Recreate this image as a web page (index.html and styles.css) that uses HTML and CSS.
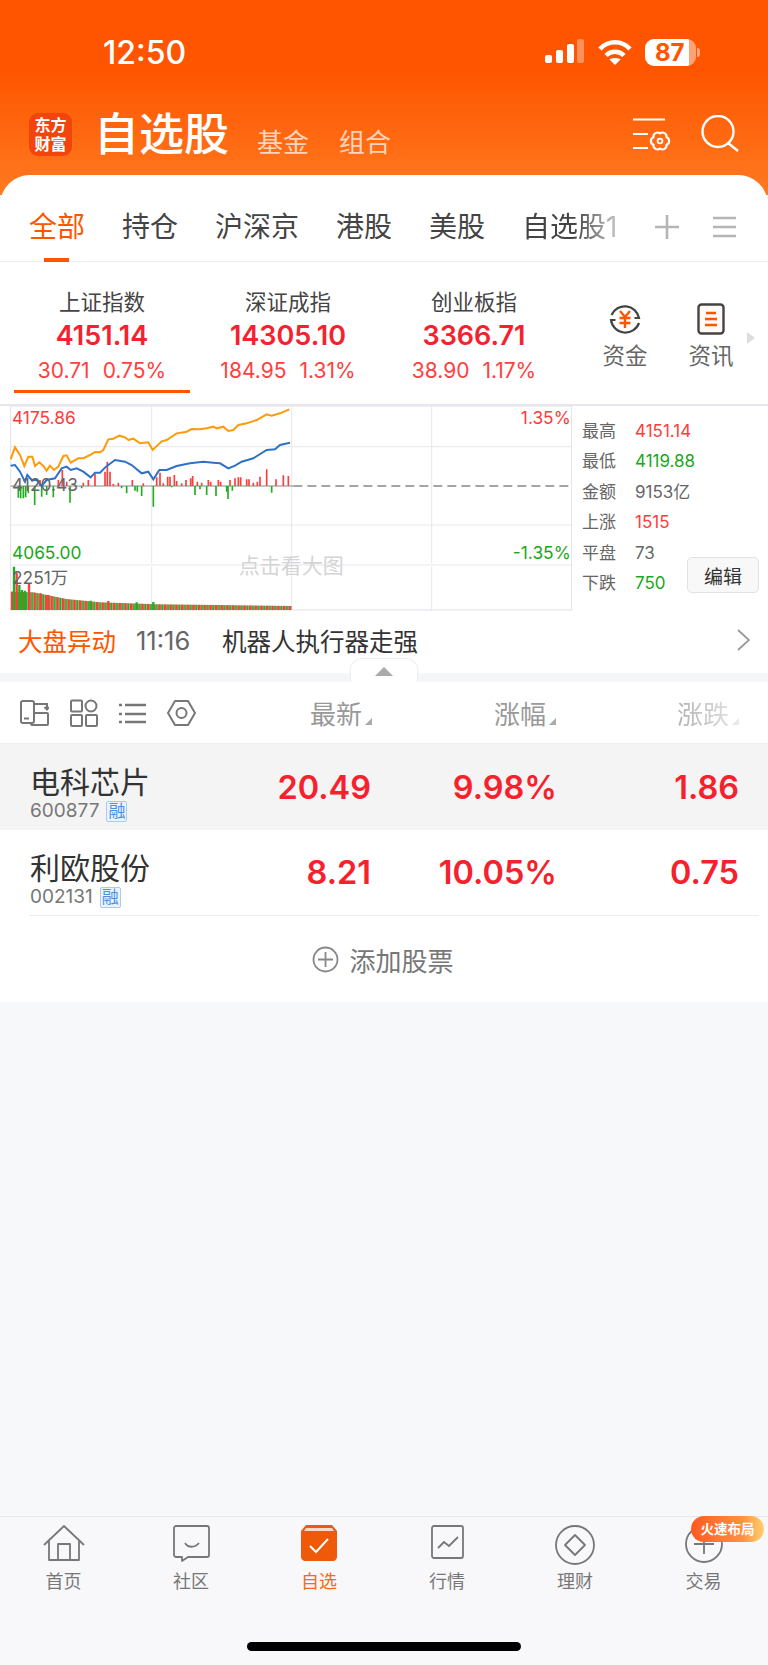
FILE: index.html
```html
<!doctype html>
<html lang="zh-CN">
  <head>
    <meta charset="UTF-8" />
    <meta name="viewport" content="width=device-width, initial-scale=1.0" />
    <title>自选股</title>
    <link rel="stylesheet" href="styles.css">
  </head>
  <body>
    <header class="top">
      <div class="status">
        <span class="clock">12:50</span>
        <svg class="signal" width="40" height="24" viewBox="0 0 40 24">
          <rect x="0" y="16" width="7" height="8" rx="2" fill="#fff"/>
          <rect x="11" y="11" width="7" height="13" rx="2" fill="#fff"/>
          <rect x="22" y="5" width="7" height="19" rx="2" fill="#fff"/>
          <rect x="32" y="0" width="7" height="24" rx="2" fill="#fff" opacity=".35"/>
        </svg>
        <svg class="wifi" width="34" height="25" viewBox="0 0 34 25">
          <path d="M2 9C10 0 24 0 32 9" fill="none" stroke="#fff" stroke-width="4.500"/>
          <path d="M8 15.500C13 10.500 21 10.500 26 15.500" fill="none" stroke="#fff" stroke-width="4.500"/>
          <path d="M17 25L11.500 19.500C14 17.500 20 17.500 22.500 19.500Z" fill="#fff"/>
        </svg>
        <div class="battery"><span class="battery-num">87</span></div>
        <span class="battery-nub"></span>
      </div>
      <div class="titlebar">
        <div class="logo">东方<br>财富</div>
        <h1 class="title">自选股</h1>
        <a class="subtitle">基金</a>
        <a class="subtitle">组合</a>
        <svg class="gear" width="38" height="33" viewBox="0 0 38 33">
          <path d="M0 1.500H32M0 16H15M0 30H15" stroke="#fff" stroke-width="2.200" fill="none"/>
          <path d="M33.500 26.750A4 4 0 0 1 27 30.500A4 4 0 0 1 20.500 26.750A4 4 0 0 1 20.500 19.250A4 4 0 0 1 27 15.500A4 4 0 0 1 33.500 19.250A4 4 0 0 1 33.500 26.750Z" stroke="#fff" stroke-width="2.200" fill="none" stroke-linejoin="round"/>
          <circle cx="27" cy="23" r="2.400" stroke="#fff" stroke-width="1.800" fill="none"/>
        </svg>
        <svg class="search" width="38" height="37" viewBox="0 0 38 37">
          <circle cx="17" cy="16.500" r="15.500" stroke="#fff" stroke-width="2.400" fill="none"/>
          <path d="M27 28L37 36" stroke="#fff" stroke-width="2.400" fill="none"/>
        </svg>
      </div>
    </header>

    <section class="sheet">
      <nav class="tabs">
        <a class="tab active">全部</a>
        <a class="tab">持仓</a>
        <a class="tab">沪深京</a>
        <a class="tab">港股</a>
        <a class="tab">美股</a>
        <a class="tab fade">自选股1</a>
        <svg class="tab-plus" width="24" height="24" viewBox="0 0 24 24">
          <path d="M12 0V24M0 12H24" stroke="#b5b5b5" stroke-width="2.600"/>
        </svg>
        <svg class="tab-menu" width="23" height="22" viewBox="0 0 23 22">
          <path d="M0 2H23M0 11H23M0 20H23" stroke="#b5b5b5" stroke-width="2.600"/>
        </svg>
      </nav>

      <div class="indexes">
        <div class="index selected">
          <div class="index-name">上证指数</div>
          <div class="index-price">4151.14</div>
          <div class="index-change"><span>30.71</span><span>0.75%</span></div>
        </div>
        <div class="index">
          <div class="index-name">深证成指</div>
          <div class="index-price">14305.10</div>
          <div class="index-change"><span>184.95</span><span>1.31%</span></div>
        </div>
        <div class="index">
          <div class="index-name">创业板指</div>
          <div class="index-price">3366.71</div>
          <div class="index-change"><span>38.90</span><span>1.17%</span></div>
        </div>
        <div class="shortcut shortcut-first">
          <svg width="32" height="34" viewBox="0 0 32 34">
            <path d="M2.500 13A14.500 14.500 0 0 1 30 16H25.500M30 21A14.500 14.500 0 0 1 2 18H6.500" fill="none" stroke="#444" stroke-width="2.200"/>
            <path d="M11 9L16 15L21 9M16 15V26M10.500 16H21.500M10.500 21H21.500" fill="none" stroke="#ff5500" stroke-width="2.400"/>
          </svg>
          <span>资金</span>
        </div>
        <div class="shortcut">
          <svg width="28" height="34" viewBox="0 0 28 34">
            <rect x="1.500" y="2.500" width="25" height="29" rx="3" fill="#fffaf6" stroke="#444" stroke-width="2.400"/>
            <path d="M9 11H19M8 17H20M8 23H20" stroke="#ff5500" stroke-width="2.400"/>
          </svg>
          <span>资讯</span>
        </div>
        <span class="more"></span>
      </div>

      <div class="market">
        <svg class="chart" width="562" height="206" viewBox="30 18 1686 618">
          <defs>
            <pattern id="vol" x="33" y="0" width="17" height="200" patternUnits="userSpaceOnUse">
              <rect x="0" y="0" width="8" height="200" fill="#ff3b3b"/>
              <rect x="9" y="0" width="7" height="200" fill="#22ad22"/>
            </pattern>
          </defs>
          <rect class="frame" x="32" y="18" width="1683" height="612"/>
          <path class="grid" d="M32 140H1715M32 375H1715M32 495H1715M455 18V490M455 500V630M875 18V630M1295 18V490M1295 500V630"/>
          <path class="baseline" d="M32 258H880"/>
          <path class="dash" d="M880 258H1710"/>
          <path class="bars-up" d="M120 258V240M175 258V240M187 258V210M200 258V245M250 258V248M265 258V240M285 258V222M315 258V215M322 258V185M330 258V215M340 258V252M355 258V248M397 258V240M430 258V250M470 258V232M480 258V218M490 258V250M503 258V230M510 258V230M523 258V225M530 258V243M545 258V250M558 258V240M572 258V235M578 258V228M592 258V245M605 258V248M625 258V240M632 258V245M655 258V240M662 258V245M690 258V240M705 258V235M715 258V232M722 258V232M740 258V238M747 258V238M760 258V248M772 258V245M780 258V230M800 258V208M828 258V238M850 258V226M865 258V228"/>
          <path class="bars-down" d="M55 258V293M62 258V295M70 258V295M77 258V292M85 258V280M104 258V315M125 258V290M140 258V285M160 258V292M210 258V308M245 258V265M365 258V265M380 258V280M405 258V272M412 258V275M425 258V288M460 258V320M515 258V262M585 258V285M600 258V268M620 258V285M648 258V288M680 258V275M684 258V297M697 258V272M815 258V278"/>
          <polyline class="line-orange" points="32,178 45,142 60,165 73,198 85,170 97,170 105,198 118,187 130,198 140,212 150,197 162,210 175,200 190,168 200,166 212,188 235,175 250,175 270,165 285,156 300,157 310,150 325,118 340,116 358,107 375,112 385,120 400,116 420,130 445,127 458,150 485,124 500,120 530,100 560,95 575,87 600,88 620,85 640,80 650,85 670,80 685,93 700,90 715,75 740,70 770,60 800,43 815,47 840,40 868,28"/>
          <polyline class="line-blue" points="32,197 45,195 60,215 75,245 82,225 95,240 110,240 125,258 140,240 165,235 185,205 200,200 212,210 230,205 250,215 272,232 285,218 300,218 318,200 345,180 375,185 395,195 425,220 445,215 460,238 478,210 500,210 530,198 570,190 610,185 640,188 660,190 685,205 705,197 725,185 760,175 800,150 825,148 840,135 870,128"/>
          <polygon points="33,575 100,577 200,597 300,607 470,613 875,618 875,630 33,630" fill="url(#vol)"/>
          <path class="vol-up" d="M36 630V575M50 630V518M87 630V550M122 630V580M145 630V585M325 630V603"/>
          <path class="vol-down" d="M42 630V500M58 630V555M66 630V570M75 630V572M272 630V602M410 630V607M460 630V606"/>
          <text class="label up" x="36" y="73">4175.86</text>
          <text class="label muted" x="36" y="274">4120.43</text>
          <text class="label down" x="36" y="478">4065.00</text>
          <text class="label muted" x="36" y="551">2251万</text>
          <text class="label up" x="1712" y="73" text-anchor="end">1.35%</text>
          <text class="label down" x="1712" y="478" text-anchor="end">-1.35%</text>
          <text class="label hint" x="874" y="520" text-anchor="middle">点击看大图</text>
        </svg>
        <div class="stats">
          <div class="stat"><span class="stat-name">最高</span><span class="up">4151.14</span></div>
          <div class="stat"><span class="stat-name">最低</span><span class="down">4119.88</span></div>
          <div class="stat"><span class="stat-name">金额</span><span class="gray">9153亿</span></div>
          <div class="stat"><span class="stat-name">上涨</span><span class="up">1515</span></div>
          <div class="stat"><span class="stat-name">平盘</span><span class="gray">73</span></div>
          <div class="stat"><span class="stat-name">下跌</span><span class="down">750</span></div>
          <button class="edit">编辑</button>
        </div>
      </div>

      <div class="news">
        <span class="news-tag">大盘异动</span>
        <span class="news-time">11:16</span>
        <span class="news-text">机器人执行器走强</span>
        <svg class="news-arrow" width="13" height="22" viewBox="0 0 13 22">
          <path d="M1 1L12 11L1 21" fill="none" stroke="#999" stroke-width="1.800"/>
        </svg>
      </div>
      <div class="band"><span class="handle"><i class="handle-arrow"></i></span></div>

      <div class="stock-head">
        <div class="tools">
          <svg width="29" height="28" viewBox="0 0 29 28">
            <rect x="1" y="2" width="13" height="22" rx="2" fill="none" stroke="#777" stroke-width="2"/>
            <path d="M4 19.500H9" stroke="#777" stroke-width="2"/>
            <path d="M15 5H27V10M24.500 8L27 10.500L29 8" fill="none" stroke="#777" stroke-width="2"/>
            <path d="M14.500 14H27C27.500 14 28 14.500 28 15V25C28 25.500 27.500 26 27 26H12C11.500 26 11 25.500 11 25V24" fill="none" stroke="#777" stroke-width="2"/>
          </svg>
          <svg width="28" height="28" viewBox="0 0 28 28">
            <rect x="1" y="1.500" width="11" height="11" rx="1" fill="none" stroke="#777" stroke-width="2"/>
            <circle cx="21" cy="7" r="5.500" fill="none" stroke="#777" stroke-width="2"/>
            <rect x="1" y="16" width="11" height="11" rx="1" fill="none" stroke="#777" stroke-width="2"/>
            <rect x="16" y="16" width="11" height="11" rx="1" fill="none" stroke="#777" stroke-width="2"/>
          </svg>
          <svg width="27" height="24" viewBox="0 0 27 24">
            <path d="M0 4H3M6 4H27M0 13H3M6 13H27M0 21H3M6 21H27" fill="none" stroke="#777" stroke-width="2.400"/>
          </svg>
          <svg width="29" height="28" viewBox="0 0 29 28">
            <path d="M8 2H21L28 14L21 26H8L1 14Z" fill="none" stroke="#777" stroke-width="2" stroke-linejoin="round"/>
            <circle cx="14.500" cy="14" r="5" fill="none" stroke="#777" stroke-width="2"/>
          </svg>
        </div>
        <div class="sort">最新<i></i></div>
        <div class="sort">涨幅<i></i></div>
        <div class="sort fade-soft">涨跌<i></i></div>
      </div>

      <div class="stock current">
        <div class="stock-info">
          <div class="stock-name">电科芯片</div>
          <div class="stock-code">600877<span class="badge">融</span></div>
        </div>
        <div class="num">20.49</div>
        <div class="num">9.98%</div>
        <div class="num">1.86</div>
      </div>
      <div class="stock">
        <div class="stock-info">
          <div class="stock-name">利欧股份</div>
          <div class="stock-code">002131<span class="badge">融</span></div>
        </div>
        <div class="num">8.21</div>
        <div class="num">10.05%</div>
        <div class="num">0.75</div>
      </div>
      <div class="add-stock">
        <svg width="27" height="27" viewBox="0 0 27 27">
          <circle cx="13.500" cy="13.500" r="12" fill="none" stroke="#888" stroke-width="1.800"/>
          <path d="M13.500 6V21M6 13.500H21" stroke="#888" stroke-width="1.800"/>
        </svg>
        <span>添加股票</span>
      </div>
    </section>

    <div class="blank"></div>

    <footer class="bottom">
      <div class="bottom-tabs">
        <a class="item">
          <svg width="42" height="37" viewBox="0 0 42 37">
            <path d="M1 20L21 1L41 20M6 16V35H36V16M15 35V19H27V35" fill="none" stroke="#777" stroke-width="1.800" stroke-linejoin="round"/>
          </svg>
          <span>首页</span>
        </a>
        <a class="item">
          <svg width="37" height="37" viewBox="0 0 37 37">
            <path d="M3 1H34C35 1 36 2 36 3V30C36 31 35 32 34 32H15L9 36V32H3C2 32 1 31 1 30V3C1 2 2 1 3 1Z" fill="none" stroke="#777" stroke-width="1.800" stroke-linejoin="round"/>
            <path d="M12 18C15 23 22 23 26 18" fill="none" stroke="#777" stroke-width="1.800"/>
          </svg>
          <span>社区</span>
        </a>
        <a class="item active">
          <svg width="36" height="36" viewBox="0 0 36 36">
            <path d="M5 0H31L36 6V32C36 34 34 36 32 36H4C2 36 0 34 0 32V6Z" fill="#ee5a0a"/>
            <path d="M5 3H31L33 6H3Z" fill="#ffd9c2"/>
            <path d="M9 21L15 27L27 14" fill="none" stroke="#fff" stroke-width="2"/>
          </svg>
          <span>自选</span>
        </a>
        <a class="item">
          <svg width="33" height="34" viewBox="0 0 33 34">
            <rect x="1" y="1" width="31" height="32" rx="2" fill="none" stroke="#777" stroke-width="1.800"/>
            <path d="M7 23L13 17L18 21L27 12" fill="none" stroke="#777" stroke-width="1.800"/>
          </svg>
          <span>行情</span>
        </a>
        <a class="item">
          <svg width="40" height="40" viewBox="0 0 40 40">
            <circle cx="20" cy="20" r="19" fill="none" stroke="#777" stroke-width="1.800"/>
            <path d="M20 10L30 20L20 30L10 20Z" fill="none" stroke="#777" stroke-width="1.800" stroke-linejoin="round"/>
          </svg>
          <span>理财</span>
        </a>
        <a class="item trade">
          <svg width="38" height="38" viewBox="0 0 38 38">
            <circle cx="19" cy="19" r="18" fill="none" stroke="#777" stroke-width="1.800"/>
            <path d="M19 9V29M9 19H29" stroke="#777" stroke-width="1.800"/>
          </svg>
          <span>交易</span>
          <b class="promo">火速布局</b>
        </a>
      </div>
      <div class="home-bar"></div>
    </footer>
  </body>
</html>
```

FILE: styles.css
```css
* {
  box-sizing: border-box;
}
body {
  margin: 0;
  width: 768px;
  height: 1665px;
  display: flex;
  flex-direction: column;
  background-color: #f7f8fa;
  font-family: Inter, "Noto Sans CJK SC", sans-serif;
  color: #333;
}

/* orange header */
.top {
  height: 195px;
  margin-bottom: -20px;
  background: linear-gradient(#ff5500 0, #ff5500 70px, #ff7a20 195px);
  color: #fff;
}
.status {
  display: flex;
  align-items: center;
  height: 104px;
  padding-left: 103px;
}
.clock {
  width: 442px;
  font-size: 32px;
  font-weight: 500;
}
.signal {
  margin-right: 13px;
  margin-top: -2px;
}
.wifi {
  margin-right: 13px;
}
.battery {
  width: 51px;
  height: 27px;
  border-radius: 9px;
  background: linear-gradient(to right, #fff 87%, rgba(255, 255, 255, 0.45) 87%);
  color: #ff5500;
  font-size: 24px;
  font-weight: bold;
  line-height: 27px;
  padding-left: 10px;
}
.battery-nub {
  width: 3px;
  height: 9px;
  margin-left: 1px;
  border-radius: 0 3px 3px 0;
  background-color: rgba(255, 255, 255, 0.5);
}
.titlebar {
  display: flex;
  align-items: flex-end;
  height: 52px;
  padding-left: 29px;
}
.logo {
  width: 43px;
  height: 43px;
  margin-right: 22px;
  border-radius: 9px;
  background-color: #f2440c;
  color: #fff;
  font-size: 16px;
  font-weight: bold;
  line-height: 19px;
  text-align: center;
  padding-top: 3px;
}
.title {
  margin: 0 28px -2px 0;
  font-size: 45px;
  font-weight: 500;
  line-height: 47px;
}
.subtitle {
  margin: 0 30px -3px 0;
  color: rgba(255, 255, 255, 0.72);
  font-size: 26px;
  line-height: 33px;
}
.gear {
  margin-left: 212px;
  margin-bottom: 5px;
}
.search {
  margin-left: 30px;
  margin-bottom: 4px;
}

/* white sheet */
.sheet {
  position: relative;
  background-color: #fff;
  border-radius: 30px 30px 0 0;
}
.tabs {
  display: flex;
  align-items: center;
  gap: 37px;
  height: 87px;
  padding: 17px 0 0 29px;
  border-bottom: 1px solid #eee;
}
.tab {
  position: relative;
  font-size: 28px;
  line-height: 40px;
  color: #444;
}
.tab.active {
  color: #ff5500;
}
.tab.active::after {
  content: "";
  position: absolute;
  left: 15px;
  bottom: -15px;
  width: 25px;
  height: 4px;
  background-color: #ff5500;
}
.fade {
  white-space: nowrap;
  -webkit-mask-image: linear-gradient(to right, #000 55%, rgba(0, 0, 0, 0.3));
  mask-image: linear-gradient(to right, #000 55%, rgba(0, 0, 0, 0.3));
}
.tab-plus {
  margin-left: 1px;
}
.tab-menu {
  margin-left: -3px;
}

/* index cards */
.indexes {
  display: flex;
  height: 142px;
  padding-left: 9px;
}
.index {
  width: 186px;
  padding-top: 26px;
  text-align: center;
}
.index.selected {
  background: linear-gradient(#ff5500, #ff5500) 5px 128px / 176px 3px no-repeat;
}
.index-name {
  font-size: 21.500px;
  line-height: 28px;
  color: #444;
}
.index-price {
  margin-top: 3px;
  font-size: 27px;
  font-weight: 600;
  line-height: 34px;
  color: #f5222d;
}
.index-change {
  display: flex;
  justify-content: center;
  gap: 13px;
  margin-top: 2px;
  font-size: 21px;
  line-height: 32px;
  color: #ff4040;
}
.shortcut {
  width: 86px;
  padding-top: 40px;
  display: flex;
  flex-direction: column;
  align-items: center;
  gap: 5px;
  font-size: 22.500px;
  line-height: 30px;
  color: #666;
}
.shortcut-first {
  margin-left: 15px;
}
.more {
  width: 0;
  height: 0;
  margin: 70px 0 0 -7px;
  border-left: 8px solid #ddd;
  border-top: 6px solid transparent;
  border-bottom: 6px solid transparent;
}

/* market chart */
.market {
  display: flex;
  height: 219px;
  padding-left: 10px;
  border-top: 2px solid #e6e6ee;
}
.chart {
  display: block;
  flex: none;
}
.frame {
  fill: none;
  stroke: #dfe0ea;
  stroke-width: 3;
}
.grid {
  fill: none;
  stroke: #e6e7f0;
  stroke-width: 3;
}
.baseline {
  stroke: #888;
  stroke-width: 3;
}
.dash {
  stroke: #888;
  stroke-width: 4;
  stroke-dasharray: 27 15;
}
.bars-up,
.vol-up {
  stroke: #ff3b3b;
  stroke-width: 5;
  fill: none;
}
.bars-down,
.vol-down {
  stroke: #22ad22;
  stroke-width: 5;
  fill: none;
}
.vol-up,
.vol-down {
  stroke-width: 7;
}
.line-orange {
  fill: none;
  stroke: #ff9a0a;
  stroke-width: 6;
}
.line-blue {
  fill: none;
  stroke: #2f72c4;
  stroke-width: 6;
}
.label {
  font-size: 52px;
}
.label.up {
  fill: #ff3b3b;
}
.label.down {
  fill: #1aa81a;
}
.label.muted {
  fill: #666;
}
.label.hint {
  fill: #d4d4d4;
  font-size: 63px;
}
.stats {
  position: relative;
  flex: 1;
  padding: 10px 0 0 10px;
  font-size: 17px;
}
.stat {
  display: flex;
  height: 30.400px;
  line-height: 30px;
  align-items: baseline;
}
.stat-name {
  width: 53px;
  color: #666;
}
.up {
  color: #ff3b3b;
}
.down {
  color: #1aa81a;
}
.gray {
  color: #666;
}
.edit {
  position: absolute;
  right: 9px;
  top: 151px;
  width: 72px;
  height: 36px;
  padding: 0;
  border: 1px solid #e2e2e2;
  border-radius: 5px;
  background-color: #f8f8f9;
  color: #333;
  font-family: inherit;
  font-size: 19px;
}

/* news line */
.news {
  display: flex;
  align-items: center;
  height: 46px;
  padding: 0 18px 4px;
  margin-top: -4px;
  font-size: 24.500px;
}
.news-tag {
  width: 118px;
  color: #ff5500;
}
.news-time {
  width: 86px;
  font-size: 25.500px;
  color: #666;
}
.news-arrow {
  margin-left: auto;
}
.band {
  position: relative;
  height: 9px;
  margin-top: 8px;
  background-color: #f5f6f8;
}
.handle {
  position: absolute;
  left: 350px;
  top: -15px;
  width: 68px;
  height: 24px;
  background-color: #fff;
  border: 1px solid #eee;
  border-bottom: 0;
  border-radius: 12px 12px 0 0;
}
.handle-arrow {
  position: absolute;
  left: 24px;
  top: 8px;
  border-left: 9px solid transparent;
  border-right: 9px solid transparent;
  border-bottom: 9px solid #aaa;
}

/* stock list */
.stock-head,
.stock {
  display: grid;
  grid-template-columns: 200px 141px 186px 182px;
  padding-left: 30px;
  align-items: center;
}
.stock-head {
  height: 62px;
  padding-left: 20px;
  grid-template-columns: 210px 142px 184px 183px;
  border-bottom: 1px solid #eee;
}
.tools {
  display: flex;
  align-items: center;
  gap: 21px;
}
.sort {
  position: relative;
  padding-right: 10px;
  text-align: right;
  font-size: 26px;
  color: #999;
}
.sort i {
  position: absolute;
  right: 0;
  bottom: 6px;
  border-left: 7px solid transparent;
  border-bottom: 7px solid #aaa;
}
.fade-soft {
  -webkit-mask-image: linear-gradient(to right, #000 50%, rgba(0, 0, 0, 0.25));
  mask-image: linear-gradient(to right, #000 50%, rgba(0, 0, 0, 0.25));
}
.stock {
  height: 85px;
}
.stock.current {
  background-color: #f4f4f5;
  height: 86px;
}
.stock-info {
  align-self: start;
  padding-top: 20px;
}
.stock-name {
  font-size: 30px;
  line-height: 36px;
  color: #333;
}
.stock-code {
  display: flex;
  align-items: center;
  gap: 7px;
  font-size: 19px;
  line-height: 22px;
  color: #777;
}
.badge {
  width: 21px;
  height: 21px;
  border: 1px solid #a9cbf2;
  border-radius: 2px;
  background-color: #eaf3fe;
  color: #4a90e2;
  font-size: 17px;
  line-height: 19px;
  text-align: center;
}
.num {
  text-align: right;
  font-size: 32.500px;
  font-weight: 600;
  color: #f5222d;
}
.add-stock {
  display: flex;
  align-items: center;
  justify-content: center;
  gap: 10px;
  height: 87px;
  margin: 0 9px 0 29px;
  border-top: 1px solid #eee;
  padding-right: 22px;
  font-size: 26px;
  color: #777;
}

.blank {
  flex: 1;
}

/* bottom tab bar */
.bottom {
  height: 149px;
  background-color: #f8f8fb;
  border-top: 1px solid #e8e8ea;
}
.bottom-tabs {
  display: grid;
  grid-template-columns: 127px 128px 128px 128px 128px 129px;
  padding-top: 8px;
}
.item {
  position: relative;
  display: flex;
  flex-direction: column;
  align-items: center;
  justify-content: space-between;
  height: 69px;
  font-size: 18px;
  line-height: 24px;
  color: #777;
}
.item.active {
  color: #f26a1a;
}
.promo {
  position: absolute;
  left: 52px;
  top: -9px;
  width: 73px;
  height: 26px;
  border-radius: 13px;
  background: linear-gradient(to right, #ff5a20, #ff9040 70%, #ffd070);
  color: #fff;
  font-size: 13.500px;
  line-height: 26px;
  text-align: center;
}
.home-bar {
  width: 274px;
  height: 9px;
  margin: 48px auto 0;
  border-radius: 5px;
  background-color: #000;
}
```
